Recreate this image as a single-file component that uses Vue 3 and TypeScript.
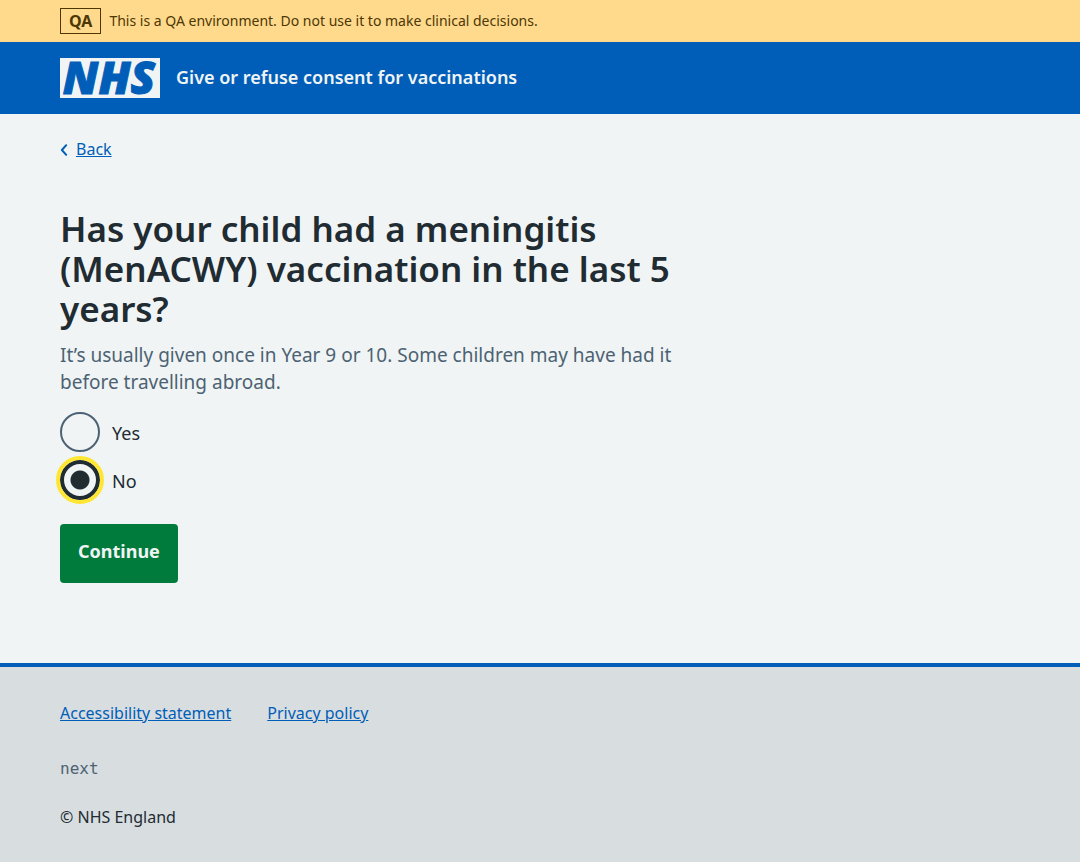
<script setup lang="ts">
import { onMounted, ref } from 'vue'

type Answer = 'yes' | 'no'

const options: { value: Answer; label: string }[] = [
  { value: 'yes', label: 'Yes' },
  { value: 'no', label: 'No' },
]
const footerLinks = ['Accessibility statement', 'Privacy policy']

const answer = ref<Answer>('no')
const form = ref<HTMLFormElement | null>(null)

onMounted(() => {
  form.value?.querySelector<HTMLInputElement>('input:checked')?.focus()
})
</script>

<template>
  <div class="page">
    <div class="environment">
      <div class="container environment-row">
        <strong class="tag">QA</strong>
        <span>This is a QA environment. Do not use it to make clinical decisions.</span>
      </div>
    </div>

    <header class="header">
      <div class="container header-row">
        <svg class="logo" viewBox="0 0 100 40" role="img" aria-label="NHS">
          <rect width="100" height="40" fill="#f0f4f5" />
          <text class="logo-text" x="49" y="36" text-anchor="middle">NHS</text>
        </svg>
        <span class="service">Give or refuse consent for vaccinations</span>
      </div>
    </header>

    <div class="container content">
      <a class="back" href="#">
        <svg class="chevron" viewBox="0 0 8 14" aria-hidden="true">
          <path d="M6.2 3.2 1.9 8l4.3 4.8" fill="none" stroke="currentColor" stroke-width="2" stroke-linecap="round" stroke-linejoin="round" />
        </svg>
        <span class="back-label">Back</span>
      </a>

      <main class="main">
        <form ref="form" @submit.prevent>
          <fieldset class="fieldset" aria-describedby="hint">
            <legend class="legend">
              <h1 class="title">Has your child had a meningitis (MenACWY) vaccination in the last 5 years?</h1>
            </legend>
            <p id="hint" class="hint">
              It’s usually given once in Year 9 or 10. Some children may have had it before travelling abroad.
            </p>
            <div class="radios">
              <div v-for="option in options" :key="option.value" class="radio">
                <input :id="`answer-${option.value}`" v-model="answer" class="radio-input" type="radio" name="answer" :value="option.value" />
                <label class="radio-label" :for="`answer-${option.value}`">{{ option.label }}</label>
              </div>
            </div>
          </fieldset>
          <button class="button" type="submit">Continue</button>
        </form>
      </main>
    </div>

    <footer class="footer">
      <div class="container">
        <ul class="links">
          <li v-for="link in footerLinks" :key="link"><a href="#">{{ link }}</a></li>
        </ul>
        <p class="version">next</p>
        <p class="copyright">© NHS England</p>
      </div>
    </footer>
  </div>
</template>

<style>
body {
  margin: 0;
  background: #d8dde0;
}
</style>

<style scoped>
.page {
  display: flex;
  flex-direction: column;
  min-height: 100vh;
  background: #f0f4f5;
  color: #212b32;
  font-family: "Noto Sans", "Open Sans", sans-serif;
  font-size: 16px;
  line-height: 24px;
}

.container {
  box-sizing: border-box;
  width: 100%;
  max-width: 1024px;
  margin: 0 auto;
  padding: 0 32px;
}

.environment {
  padding: 8px 0;
  background: #ffda8c;
  color: #4d3705;
  font-size: 14px;
}

.environment-row {
  display: flex;
  align-items: center;
  gap: 8px;
}

.tag {
  padding: 0 8px;
  border: 1px solid currentColor;
  font-size: 16px;
  font-weight: 700;
  line-height: 24px;
}

.header {
  padding: 16px 0;
  background: #005eb8;
  color: #f0f4f5;
}

.header-row {
  display: flex;
  align-items: center;
  gap: 16px;
}

.logo {
  flex: none;
  width: 100px;
  height: 40px;
  overflow: visible;
}

.logo-text {
  fill: #005eb8;
  stroke: #005eb8;
  stroke-width: 1px;
  font-family: "Open Sans", "Noto Sans", sans-serif;
  font-size: 45px;
  font-style: italic;
  font-weight: 800;
}

.service {
  padding-bottom: 2px;
  font-size: 18px;
  font-weight: 600;
}

.content {
  flex: 1 0 auto;
  padding-top: 23px;
  padding-bottom: 80px;
}

.back {
  display: flex;
  align-items: center;
  gap: 8px;
  width: fit-content;
  color: #005eb8;
  text-decoration: none;
}

.back-label {
  text-decoration: underline;
}

.chevron {
  width: 8px;
  height: 14px;
}

.main {
  max-width: 640px;
  padding-top: 48px;
}

.fieldset {
  min-width: 0;
  margin: 0;
  padding: 0;
  border: 0;
}

.legend {
  padding: 0;
}

.title {
  margin: 0;
  font-size: 35px;
  font-weight: 600;
  line-height: 40px;
}

.hint {
  margin: 13px 0 16px;
  color: #4c6272;
  font-size: 19px;
  line-height: 27px;
}

.radios {
  display: grid;
  gap: 8px;
}

.radio {
  display: flex;
  align-items: center;
  gap: 12px;
}

.radio-input {
  box-sizing: border-box;
  width: 40px;
  height: 40px;
  margin: 0;
  border: 2px solid #4c6272;
  border-radius: 50%;
  appearance: none;
}

.radio-input:checked {
  border-color: #212b32;
  background: radial-gradient(circle, #212b32 0 9px, transparent 10px);
}

.radio-input:focus {
  border-width: 4px;
  outline: 4px solid #ffe632;
  outline-offset: 0;
}

.radio-label {
  padding-top: 2px;
  font-size: 18px;
}

.button {
  margin-top: 24px;
  padding: 13px 18px 18px;
  border: 0;
  border-radius: 4px;
  background: #007b3b;
  color: #f0f4f5;
  font-family: inherit;
  font-size: 18px;
  font-weight: 700;
  line-height: 28px;
}

.footer {
  padding: 34px 0 33px;
  border-top: 4px solid #005eb8;
  background: #d8dde0;
}

.footer a {
  color: #005eb8;
}

.links {
  display: flex;
  flex-wrap: wrap;
  gap: 8px 36px;
  margin: 0;
  padding: 0;
  list-style: none;
}

.version {
  margin: 32px 0 24px;
  color: #4c6272;
  font-family: "DejaVu Sans Mono", monospace;
}

.copyright {
  margin: 0;
}
</style>
